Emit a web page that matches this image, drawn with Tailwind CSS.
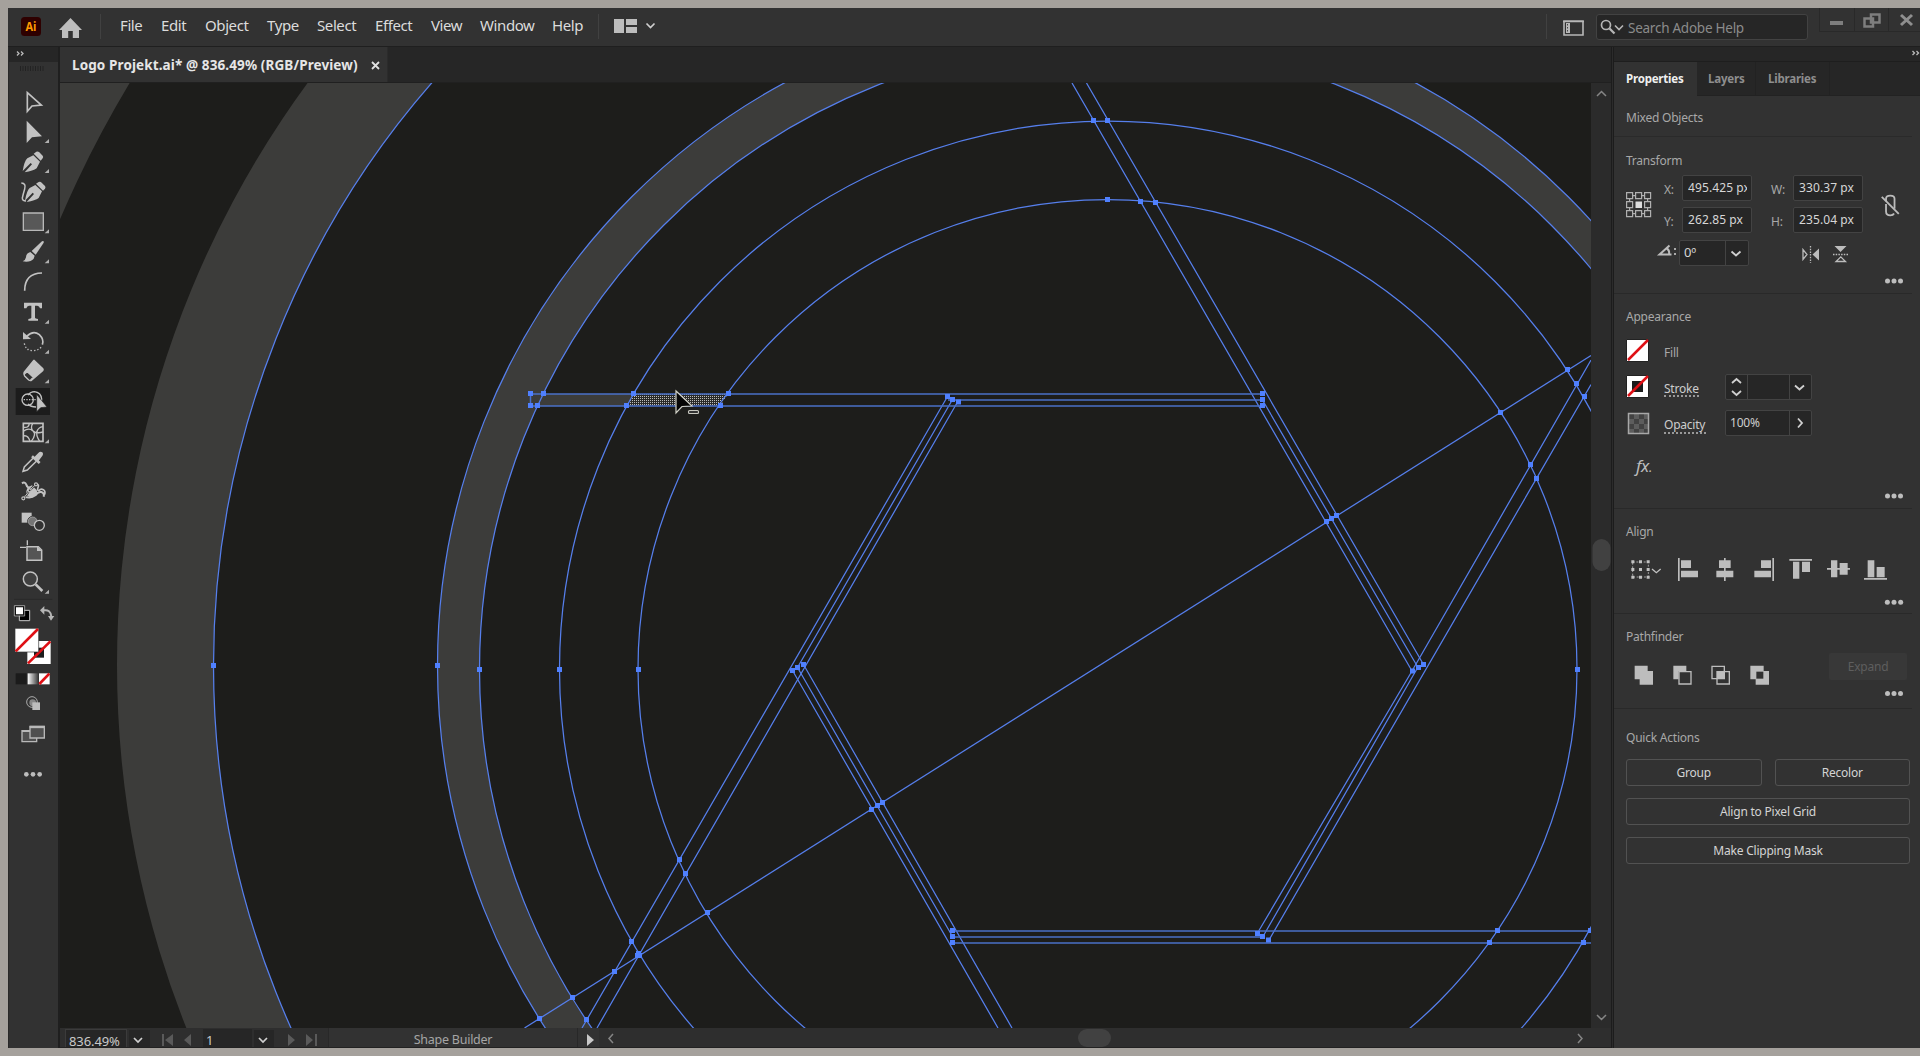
<!DOCTYPE html>
<html lang="en">
<head>
<meta charset="utf-8">
<title>Logo Projekt.ai</title>
<script src="https://cdn.jsdelivr.net/npm/@tailwindcss/browser@4"></script>
</head>
<body class="bg-[#a5a19c] w-[1920px] h-[1056px] overflow-hidden pl-2 py-2 font-['Noto_Sans',sans-serif] text-[#d6d6d6]">
<div class="h-[1040px] w-[1912px] flex flex-col bg-[#323232] overflow-hidden">

  <!-- Menu bar -->
  <header class="h-[39px] shrink-0 flex border-b border-[#1f1f1f] bg-[#323232]">
    <svg class="w-[94px] h-[38px] shrink-0" viewBox="8 8 94 38">
      <rect x="21" y="17" width="20" height="19" rx="3.5" fill="#2e0000"/>
      <text x="31" y="31" text-anchor="middle" font-size="12" font-weight="700" fill="#ff9a00" font-family="Open Sans, sans-serif" textLength="11" lengthAdjust="spacingAndGlyphs">Ai</text>
      <path d="M70.500 18L59 30h3v8h6.200v-7h4.600v7H79v-8h3z" fill="#bdbdbd"/>
      <path d="M100.500 14v25" stroke="#414141"/>
    </svg>
    <nav class="flex h-[34px] items-center text-[15px] pl-[18px] text-[#dcdcdc] tracking-[-0.4px] whitespace-nowrap">
      <span class="w-[41px]">File</span><span class="w-[44px]">Edit</span><span class="w-[62px]">Object</span><span class="w-[50px]">Type</span><span class="w-[58px]">Select</span><span class="w-[56px]">Effect</span><span class="w-[49px]">View</span><span class="w-[72px]">Window</span><span class="w-[46px]">Help</span>
    </nav>
    <svg class="w-[62px] h-[38px] shrink-0" viewBox="598 8 62 38">
      <path d="M598.500 14v25" stroke="#414141"/>
      <path d="M614 19h10v14h-10zM626 19h11v6h-11zM626 27h11v6h-11z" fill="#bdbdbd"/>
      <path d="M646.500 23.500l4 4 4-4" fill="none" stroke="#cfcfcf" stroke-width="1.700"/>
    </svg>
    <div class="grow"></div>
    <svg class="w-[52px] h-[38px] shrink-0" viewBox="1544 8 52 38">
      <path d="M1546.500 14v25" stroke="#414141"/>
      <path d="M1564 21h19v14h-19zM1563 21.500h21" fill="none" stroke="#b8b8b8" stroke-width="1.600"/>
      <path d="M1566 23h4v10h-4z" fill="#b8b8b8"/><path d="M1567.500 24v8" stroke="#444" stroke-dasharray="1.500 1.500"/>
    </svg>
    <div class="w-[212px] h-[26px] mt-1.5 border border-[#424242] bg-[#262626] rounded-[3px] flex items-center text-[13.500px] text-[#8b8b8b] tracking-[-0.25px]">
      <svg class="w-[31px] h-6 shrink-0" viewBox="1597 15 31 24"><circle cx="1606" cy="25" r="4.500" fill="none" stroke="#b5b5b5" stroke-width="1.700"/><path d="M1609.500 28.500l5 5" stroke="#b5b5b5" stroke-width="2.300"/><path d="M1615 25.500l4 4 4-4" fill="none" stroke="#b5b5b5" stroke-width="1.600"/></svg>
      <span class="pt-[3px]">Search Adobe Help</span>
    </div>
    <svg class="w-[112px] h-[38px] shrink-0" viewBox="1808 8 112 38">
      <path d="M1819.500 8v23.500H1920M1854.500 8v23M1888.500 8v23" fill="none" stroke="#292929"/>
      <path d="M1830 21h13v4h-13z" fill="#7e7e7e"/>
      <path d="M1871 14.500h8.500v8h-8.500zM1864.500 18.500h8.500v8h-8.500z" fill="#323232" stroke="#7e7e7e" stroke-width="2.500"/>
      <path d="M1901 15l11 10M1912 15l-11 10" stroke="#8f8f8f" stroke-width="3"/>
    </svg>
  </header>

  <div class="flex grow min-h-0">
    <!-- Tools -->
    <aside class="w-[50px] shrink-0 flex flex-col bg-[#323232] border-l border-[#292929]">
      <div class="h-[15px] bg-[#262626] shrink-0"><svg class="w-[49px] h-[15px]" viewBox="9 47 49 15"><path d="M17 51.500l2 2-2 2M21 51.500l2 2-2 2" fill="none" stroke="#bbb" stroke-width="1.300"/></svg></div>
      <svg class="w-[49px] h-[25px] shrink-0" viewBox="9 62 49 25"><path d="M20 68.500h24" stroke="#222" stroke-width="5" stroke-dasharray="1 1.500"/></svg>
      <svg class="w-[49px] h-[30px] shrink-0" viewBox="27 21 147 90"><path d="M82 38v56l14-16 28-3z" fill="none" stroke="#c2c2c2" stroke-width="5"/></svg>
      <svg class="w-[49px] h-[30px] shrink-0" viewBox="27 111 147 90"><path d="M80 122v67l16-17 30-3z" fill="#c2c2c2"/><path d="M147 177v12h-13z" fill="#b0b0b0"/></svg>
      <svg class="w-[49px] h-[30px] shrink-0" viewBox="27 201 147 90"><g fill="#c2c2c2"><path d="M68 273q5-30 14-38l18-9 20 19-10 20q-10 8-36 12l22-24-4-4z"/><path d="M101 221l8-6q5-2 9 2l10 10q3 4 0 8l-6 7z"/></g><path d="M147 267v12h-13z" fill="#b0b0b0"/></svg>
      <svg class="w-[49px] h-[30px] shrink-0" viewBox="27 291 147 90"><path d="M64 309q15 1 10 18t-7 27q0 9 11 9" fill="none" stroke="#c2c2c2" stroke-width="4.500"/><g fill="#c2c2c2"><path d="M75 362q5-30 14-38l17-9 20 19-10 20q-10 8-36 12l22-24-4-4z"/><path d="M108 311l8-5q5-2 9 2l10 10q3 4 0 8l-6 6z"/></g></svg>
      <svg class="w-[49px] h-[30px] shrink-0" viewBox="27 381 147 90"><path d="M70 399h60v52H70z" fill="#585858" stroke="#b8b8b8" stroke-width="4"/><path d="M147 448v12h-13z" fill="#b0b0b0"/></svg>
      <svg class="w-[49px] h-[30px] shrink-0" viewBox="27 471 147 90"><g fill="#c2c2c2"><path d="M95 513l31-29q7-3 5 4l-24 36z"/><path d="M91 516l13 11-3 9q-10 12-33 8 9-4 10-12 0-12 13-16z"/></g><path d="M147 538v12h-13z" fill="#b0b0b0"/></svg>
      <svg class="w-[49px] h-[30px] shrink-0" viewBox="27 561 147 90"><path d="M74 632q0-52 52-53" fill="none" stroke="#c2c2c2" stroke-width="5"/></svg>
      <svg class="w-[49px] h-[30px] shrink-0" viewBox="27 651 147 90"><path d="M72 668h54v17h-6q-2-8-8-8h-7v36q0 3 9 4v5H85v-5q9-1 9-4v-36h-7q-6 0-8 8h-7z" fill="#c2c2c2"/><path d="M147 719v12h-13z" fill="#b0b0b0"/></svg>
      <svg class="w-[49px] h-[30px] shrink-0" viewBox="27 741 147 90"><path d="M80 769q20-20 38-5 15 15 9 30" fill="none" stroke="#c2c2c2" stroke-width="5"/><path d="M69 756v22l24-1z" fill="#c2c2c2"/><path d="M73 790q4 22 26 22 17 0 27-14" fill="none" stroke="#c2c2c2" stroke-width="4" stroke-dasharray="4 6"/><path d="M147 809v12h-13z" fill="#b0b0b0"/></svg>
      <svg class="w-[49px] h-[30px] shrink-0" viewBox="27 831 147 90"><path d="M104 840l26 25q3 4 0 8l-34 29q-4 4-8 0l-17-18q-3-5 0-9l28-34q3-4 5-1z" fill="#c2c2c2"/><path d="M82 875l18 17-8 8q-3 2-6 0l-12-12q-3-4 0-7z" fill="#323232" stroke="#c2c2c2" stroke-width="4"/><path d="M147 898v12h-13z" fill="#b0b0b0"/></svg>
      <svg class="w-[49px] h-[30px] shrink-0" viewBox="27 921 147 90"><path d="M47 924h103v81H47z" fill="#1c1c1c"/><circle cx="83" cy="959" r="17" fill="none" stroke="#c2c2c2" stroke-width="4"/><path d="M84 945q8-10 19-10 20 2 22 22 0 12-9 20M84 972q8 9 24 9" fill="none" stroke="#c2c2c2" stroke-width="4"/><path d="M71 959h45" stroke="#c2c2c2" stroke-width="4" stroke-dasharray="4 4"/><path d="M110 943v52l12-12 19-2z" fill="#c2c2c2" stroke="#1c1c1c" stroke-width="2"/></svg>
      <svg class="w-[49px] h-[30px] shrink-0" viewBox="27 1011 147 90"><path d="M70 1030h59v54H70z" fill="none" stroke="#c2c2c2" stroke-width="5"/><path d="M70 1054q16-12 28-2t31 4M72 1042q14 2 16-12M98 1030q-8 14 2 24t-6 30M129 1040q-14 2-18 14t8 30M70 1068q14-4 20 16" fill="none" stroke="#c2c2c2" stroke-width="4"/><path d="M147 1078v12h-13z" fill="#b0b0b0"/></svg>
      <svg class="w-[49px] h-[30px] shrink-0" viewBox="27 51 147 90"><path d="M101 83l14-14q6-7 12-2 5 6-2 13l-10 14z" fill="#c2c2c2"/><path d="M96 79l23 20" stroke="#c2c2c2" stroke-width="8"/><path d="M99 85l-26 26-4 13 13-4 27-26" fill="none" stroke="#c2c2c2" stroke-width="4.500"/></svg>
      <svg class="w-[49px] h-[30px] shrink-0" viewBox="27 141 147 90"><path d="M66 160q8-6 13 4 3 10 12 9M72 199q20 8 34-3 8-12 18-10 10 4 7 14" fill="none" stroke="#c2c2c2" stroke-width="6"/><path d="M84 172l12-6 14 14q4 8-4 16l-12 8-14-8q-4-12 4-24z" fill="#c2c2c2"/><path d="M110 163q8 0 4 10t4 8q4-6 12-2 8 6 3 16" fill="none" stroke="#c2c2c2" stroke-width="5"/><path d="M73 202l13-17M92 178l13-12" stroke="#323232" stroke-width="6"/><path d="M73 202l13-17M92 178l13-12" stroke="#c2c2c2" stroke-width="3"/><g fill="#323232" stroke="#c2c2c2" stroke-width="3.500"><circle cx="108" cy="163" r="4.500"/><circle cx="89" cy="181" r="4.500"/><circle cx="70" cy="205" r="4.500"/></g></svg>
      <svg class="w-[49px] h-[30px] shrink-0" viewBox="27 231 147 90"><path d="M65 248h30v30H65z" fill="#c2c2c2"/><circle cx="98" cy="274" r="15" fill="#757575" stroke="#323232" stroke-width="3"/><circle cx="98" cy="274" r="13" fill="#757575" stroke="#a8a8a8" stroke-width="2"/><circle cx="118" cy="286" r="15" fill="#323232" stroke="#c2c2c2" stroke-width="4"/></svg>
      <svg class="w-[49px] h-[30px] shrink-0" viewBox="27 321 147 90"><path d="M81 350h34l10 10v31H81z" fill="#555" stroke="#c2c2c2" stroke-width="4.500"/><path d="M60 352h18M82 331v15" stroke="#c2c2c2" stroke-width="4"/><path d="M111 349l15 14h-15z" fill="#c2c2c2"/></svg>
      <svg class="w-[49px] h-[30px] shrink-0" viewBox="27 411 147 90"><circle cx="91" cy="447" r="21" fill="#404040" stroke="#c2c2c2" stroke-width="4.500"/><path d="M107 463l20 20" stroke="#c2c2c2" stroke-width="8"/><path d="M147 479v12h-13z" fill="#b0b0b0"/></svg>
      <!-- Fill, stroke and screen modes -->
      <svg class="w-[49px] h-[200px] shrink-0" viewBox="27 501 147 600">
        <path d="M42 508h115" stroke="#292929" stroke-width="3"/>
        <path d="M58 541h31v31H58z" fill="#000" stroke="#c8c8c8" stroke-width="3"/><path d="M46 530h25v25H46z" fill="#fff" stroke="#111" stroke-width="4"/><path d="M43 527h31v31H43z" fill="none" stroke="#c8c8c8" stroke-width="2"/>
        <path d="M130 541q22-4 24 19" fill="none" stroke="#b5b5b5" stroke-width="6"/><path d="M133 528v26l-13-13zM144 558h19l-10 14z" fill="#b5b5b5"/>
        <path d="M82 633h70v69H82z" fill="#fff"/><path d="M102 653h30v30h-30z" fill="#1c1c1c"/><path d="M84 700l67-66" stroke="#df1015" stroke-width="8"/>
        <path d="M45 595h71v71H45z" fill="#fff" stroke="#333" stroke-width="2"/><path d="M47 664l67-67" stroke="#df1015" stroke-width="8"/>
        <defs><linearGradient id="ramp"><stop stop-color="#fff"/><stop offset="1" stop-color="#333"/></linearGradient></defs>
        <path d="M47 730h33v33H47z" fill="#1b1b1b"/><path d="M83 730h33v33H83z" fill="url(#ramp)"/><path d="M117 730h32v33h-32z" fill="#fff"/><path d="M118 762l30-31" stroke="#df1015" stroke-width="8"/>
        <circle cx="96" cy="816" r="16" fill="none" stroke="#aaa" stroke-width="3"/><circle cx="98" cy="818" r="10" fill="#888"/><path d="M97 817h23v23H97z" fill="#bdbdbd"/>
        <path d="M66 902h44v33H66z" fill="#505050" stroke="#b8b8b8" stroke-width="4"/><path d="M66 903h44" stroke="#b8b8b8" stroke-width="6"/><path d="M90 889h43v35H90z" fill="#505050" stroke="#b8b8b8" stroke-width="4"/><path d="M89 891h45" stroke="#b8b8b8" stroke-width="7"/>
        <g fill="#bdbdbd"><circle cx="79" cy="1033" r="7"/><circle cx="99" cy="1033" r="7"/><circle cx="119" cy="1033" r="7"/></g>
      </svg>
    </aside>
    <div class="w-0.5 shrink-0 bg-[#1f1f1f]"></div>

    <!-- Document -->
    <main class="w-[1551px] shrink-0 flex flex-col">
      <div class="h-9 shrink-0 bg-[#262626] flex border-b border-[#202020]">
        <div class="w-[328px] bg-[#323232] border-r border-[#2b2b2b] flex items-center pl-3 pt-0.5 text-[13.500px] font-bold text-[#e6e6e6] whitespace-nowrap">
          <span class="w-[299px] tracking-[0.11px]">Logo Projekt.ai* @ 836.49% (RGB/Preview)</span>
          <svg class="w-[9px] h-[9px]" viewBox="0 0 9 9"><path d="M1 1l7 7M8 1L1 8" stroke="#e0e0e0" stroke-width="1.800"/></svg>
        </div>
      </div>
      <div class="flex h-[945px] shrink-0">
        <svg class="w-[1531px] h-[945px] bg-[#1d1d1b]" viewBox="60 83 1531 945">
          <defs><pattern id="mesh" width="2" height="2" patternUnits="userSpaceOnUse"><rect width="2" height="2" fill="#2a2a28"/><rect width="1" height="1" fill="#bcbcba"/></pattern></defs>
          <path fill-rule="evenodd" fill="#3c3c3a" d="M0 0H1700V1100H0zM-31.500 665a1131.500 1131.500 0 1 0 2263 0a1131.500 1131.500 0 1 0 -2263 0z"/>
          <path fill-rule="evenodd" fill="#3c3c3a" d="M117 665a983 983 0 1 0 1966 0a983 983 0 1 0 -1966 0zM213.500 665.500a886.500 886.500 0 1 0 1773 0a886.500 886.500 0 1 0 -1773 0z"/>
          <path fill-rule="evenodd" fill="#3c3c3a" d="M437.500 665.500a662.500 662.500 0 1 0 1325 0a662.500 662.500 0 1 0 -1325 0zM479.500 669.500a628 628 0 1 0 1256 0a628 628 0 1 0 -1256 0z"/>
          <path d="M530 394H633L626 406H530z" fill="#3c3c3a"/>
          <path d="M634 394H728L720 406H626z" fill="url(#mesh)"/>
          <g fill="none" stroke="#567fec" stroke-width="1.250">
            <circle cx="1100" cy="665.500" r="886.500"/><circle cx="1100" cy="665.500" r="662.500"/><circle cx="1107.500" cy="669.500" r="628"/><circle cx="1107.500" cy="669" r="548"/><circle cx="1107.500" cy="669" r="469.500"/>
            <path d="M524.500 1028L1591 355.500"/>
            <path d="M1072 83L1412 671M1086.500 83L1423.500 664.500M1262.500 400L1418 667.500"/>
            <path d="M1591 360L1412 671L1257.500 933M1591 384.500L1269 940M1418 667L1263 936.500"/>
            <path d="M947.500 396.500L582 1028M957.500 402L597 1028M952.500 399.500L797.500 667.500"/>
            <path d="M792.500 670.500L998 1028M797.500 667.500L952.500 936.500M803.500 664.500L1012 1028"/>
          </g>
          <path fill="none" stroke="#4a70c8" stroke-width="1.500" d="M530.500 394H1262.500M530.500 406H1262.500M530.500 394v12M948 400H1262.500M952.500 931H1591M952.500 937H1263M952.500 943H1591"/>
          <path fill="none" stroke="#4f80ff" stroke-width="5" d="M528 393.500h5M541 393.500h5M528 405.500h5M535 405.500h5M631 393.500h5M624 405.500h5M726 393.500h5M718 405.500h5M1260 393.500h5M1260 399.500h5M1260 405.500h5M1324 521.500h5M1329 518.500h5M1334 515.500h5M1410 671h5M1416 667.500h5M1421 664.500h5M1498 412.500h5M1565 369.500h5M1574 383.500h5M1582 396.500h5M1528 464.500h5M1534 478.500h5M1575 669.500h5M1091 120.500h5M1105 120.500h5M1105 199.500h5M1138 201.500h5M1153 202.500h5M211 665.500h5M435 665.500h5M477 669.500h5M557 669.500h5M636 669.500h5M570 997.500h5M537 1018.500h5M584 1019.500h5M612 971.500h5M635 955.500h7M636 953.500h5M629 941.500h5M677 859.500h5M683 873.500h5M705 912.500h5M790 670.500h5M795 667.500h5M801 664.500h5M869 809.500h5M875 805.500h5M880 802.500h5M950 930.500h5M950 936.500h5M950 942.500h5M945 396.500h5M950 399.500h5M956 402h5M1255 933.500h5M1260 936.500h5M1266 940h5M1495 930.500h5M1487 942.500h5M1588 930.500h5M1581 942.500h5"/>
          <path d="M676 391v22l6-6.500 10-.5z" fill="#050505" stroke="#d2d2c8" stroke-width="1.200"/>
          <rect x="688.500" y="410.500" width="10" height="3" rx="1" fill="#333" stroke="#c8c8c0" stroke-width="1.100"/>
        </svg>
        <svg class="w-5 h-[945px] bg-[#2b2b2b]" viewBox="1591 83 20 945"><path d="M1597 96l4.500-4.500L1606 96M1597 1015l4.500 4.500L1606 1015" fill="none" stroke="#858585" stroke-width="1.500"/><rect x="1592.500" y="539" width="18" height="32" rx="9" fill="#414141"/></svg>
      </div>
      <div class="h-5 shrink-0 flex bg-[#2e2e2e] border-b border-[#222] text-[13px] text-[#c9c9c9] overflow-hidden">
        <div class="ml-[5px] w-[62px] h-[19px] mt-px bg-[#262626] border border-b-0 border-[#3b3b3b] pl-[3px] leading-[22px] tracking-[-0.1px] whitespace-nowrap">836.49%</div>
        <svg class="w-[76px] h-5" viewBox="127 1028 76 20"><path d="M129 1030h21v20h-21z" fill="#262626"/><path d="M134 1038l4 4 4-4" fill="none" stroke="#d0d0d0" stroke-width="1.700"/><path d="M162 1034h2v12h-2zM173 1034v12l-8-6zM191 1034v12l-7-6z" fill="#5a5a5a"/></svg>
        <div class="w-[49px] h-[19px] mt-px bg-[#262626] pl-[3px] leading-[23px]">1</div>
        <svg class="w-[76px] h-5" viewBox="252 1028 76 20"><path d="M254 1030h20v20h-20z" fill="#262626"/><path d="M259 1038l4 4 4-4" fill="none" stroke="#d0d0d0" stroke-width="1.700"/><path d="M288 1034v12l7-6zM306 1034v12l7-6zM315 1034h2v12h-2z" fill="#5a5a5a"/></svg>
        <div class="w-[250px] h-[19px] bg-[#323232] border-x border-[#282828] text-center leading-[24px] text-[#a5a5a5] text-[12.500px] tracking-[-0.25px]">Shape Builder</div>
        <svg class="w-[44px] h-5" viewBox="578 1028 44 20"><path d="M578 1028h21v20h-21z" fill="#323232"/><path d="M587 1034v12l7-6z" fill="#c8c8c8"/><path d="M613 1034l-4 4.500 4 4.500" fill="none" stroke="#858585" stroke-width="1.500"/></svg>
        <svg class="w-[989px] h-5" viewBox="622 1028 989 20"><rect x="1078" y="1029" width="33" height="18" rx="9" fill="#414141"/><path d="M1578 1034l4 4.500-4 4.500" fill="none" stroke="#858585" stroke-width="1.500"/></svg>
      </div>
    </main>
    <div class="w-[3px] shrink-0 bg-[#2b2b2b] border-x border-[#1c1c1c]"></div>

    <!-- Properties panel -->
    <aside class="w-[306px] shrink-0 bg-[#323232] text-[12px] tracking-[-0.22px] text-[#a8a8a8] whitespace-nowrap">
      <div class="h-[15px] bg-[#262626] border-b border-[#1e1e1e] flex justify-end"><svg class="w-2 h-3" viewBox="1912 48 8 12"><path d="M1912.500 52l2 2-2 2M1916.500 52l2 2-2 2" fill="none" stroke="#bbb" stroke-width="1.300"/></svg></div>
      <div class="flex h-[34px] bg-[#262626] font-bold text-[11.500px] tracking-[-0.2px] items-stretch leading-[34px]">
        <div class="w-[83px] pl-3 bg-[#323232] text-[#efefef]">Properties</div>
        <div class="w-[59px] pl-[11px] border-r border-b border-[#222] text-[#8e8e8e]">Layers</div>
        <div class="w-[74px] pl-3 border-r border-b border-[#222] text-[#8e8e8e]">Libraries</div>
        <div class="grow border-b border-[#222]"></div>
      </div>
      <div class="h-[41px] pl-3 leading-[43px] border-b border-[#2a2a2a] mr-2">Mixed Objects</div>

      <section class="h-[157px] mr-2 border-b border-[#292929] pt-[15px] pl-3">
        <h2 class="h-[18px] leading-[18px]">Transform</h2>
        <div class="flex mt-[5px] h-[60px]">
          <svg class="w-[38px] h-[60px] shrink-0" viewBox="0 0 38 60"><g fill="none" stroke="#b0b0b0" stroke-width="1.200"><path d="M.6 17.600h6v6h-6zM9.600 17.600h6v6h-6zM18.600 17.600h6v6h-6zM.6 26.600h6v6h-6zM18.600 26.600h6v6h-6zM.6 35.600h6v6h-6zM9.600 35.600h6v6h-6zM18.600 35.600h6v6h-6zM6.600 20.600h3M15.600 20.600h3M6.600 38.600h3M15.600 38.600h3M3.600 23.600v3M3.600 32.600v3M21.600 23.600v3M21.600 32.600v3"/></g><path d="M9.500 26.500h6.500v6.500H9.500z" fill="#ddd"/></svg>
          <div class="grid grid-cols-[18px_70px_41px_70px] grid-rows-[26px_26px] gap-y-[6px] content-start items-center leading-[24px]">
            <span class="pt-[3px]">X:</span><div class="h-[26px] rounded-[2px] border border-[#434343] bg-[#262626] pl-[5px] pr-1 text-[#d6d6d6] tracking-[0.1px]"><div class="overflow-hidden w-[59px]">495.425 px</div></div><span class="pl-[19px] pt-[3px]">W:</span><div class="h-[26px] rounded-[2px] border border-[#434343] bg-[#262626] pl-[5px] text-[#d6d6d6] tracking-[0.1px]">330.37 px</div>
            <span class="pt-[3px]">Y:</span><div class="h-[26px] rounded-[2px] border border-[#434343] bg-[#262626] pl-[5px] text-[#d6d6d6] tracking-[0.1px]">262.85 px</div><span class="pl-[19px] pt-[3px]">H:</span><div class="h-[26px] rounded-[2px] border border-[#434343] bg-[#262626] pl-[5px] text-[#d6d6d6] tracking-[0.1px]">235.04 px</div>
          </div>
          <svg class="w-9 h-[60px] ml-[15px]" viewBox="1878 176 36 60"><path d="M1886.500 202v-2.500q0-3.500 4.500-3.500t4.500 3.500V210M1886.500 205v8q0 4 4.500 4 3 0 4-2" fill="none" stroke="#bcbcbc" stroke-width="1.900"/><path d="M1882 197.500l18 18" stroke="#bcbcbc" stroke-width="1.900"/></svg>
        </div>
        <div class="flex mt-[5px] h-[27px]">
          <svg class="w-[53px] h-[27px]" viewBox="1626 241 53 27"><path d="M1671.500 255.500h-12l10-9M1666 249q4 2 3 6.500" fill="none" stroke="#bcbcbc" stroke-width="2"/><path d="M1674 249h2v2h-2zM1674 254h2v2h-2z" fill="#aaa"/></svg>
          <div class="w-[70px] h-[26px] rounded-[2px] border border-[#434343] bg-[#262626] flex text-[13px] text-[#d6d6d6] leading-[23px]"><span class="w-[46px] pl-1 border-r border-[#434343]">0º</span><svg class="w-[22px] h-6" viewBox="0 0 22 24"><path d="M5.500 10.500l4.500 4 4.500-4" fill="none" stroke="#d0d0d0" stroke-width="1.800"/></svg></div>
          <svg class="w-[110px] h-[27px]" viewBox="1749 241 110 27"><g fill="none" stroke="#bcbcbc" stroke-width="1.300"><path d="M1803 250.500v10l4-5zM1836 262.500h9.500l-4.700-4.700z"/><path d="M1810.500 247v17M1833 255.500h15" stroke-dasharray="1.500 1.200"/></g><path d="M1819 249.500v12l-6.500-6zM1834.500 247h12l-6 6z" fill="#bcbcbc"/></svg>
        </div>
        <svg class="w-[280px] h-[20px] block" viewBox="1626 267 280 20"><g fill="#bdbdbd"><circle cx="1887.500" cy="281" r="2.500"/><circle cx="1894" cy="281" r="2.500"/><circle cx="1900.500" cy="281" r="2.500"/></g></svg>
      </section>

      <section class="h-[215px] mr-2 border-b border-[#292929] pt-[14px] pl-3">
        <h2 class="h-[18px] leading-[18px]">Appearance</h2>
        <div class="flex h-[36px] mt-[8px] leading-[38px]"><svg class="w-[38px] h-9" viewBox="1626 335 38 36"><path d="M1626.500 340.500h22v22h-22z" fill="#fff" stroke="#222"/><path d="M1628 361l20-20" stroke="#df1015" stroke-width="2.500"/></svg>Fill</div>
        <div class="flex h-[36px] leading-[34px] text-[#cdcdcd]"><svg class="w-[38px] h-9" viewBox="1626 371 38 36"><path d="M1626.500 376.500h22v22h-22z" fill="#fff" stroke="#222"/><path d="M1632 382h11v11h-11z" fill="#1c1c1c"/><path d="M1628 397l20-20" stroke="#df1015" stroke-width="2.500"/></svg><div class="w-[61px] pt-[11px]"><span class="block w-[35px] h-[16px] leading-[15px] border-b-2 border-dotted border-[#999]">Stroke</span></div>
          <div class="mt-[4px] w-[87px] h-[26px] rounded-[2px] border border-[#434343] bg-[#262626]"><svg class="w-[85px] h-6" viewBox="0 0 85 24"><path d="M21.500 0v24M63.500 0v24" stroke="#434343"/><path d="M6 8l4.500-4L15 8M6 16l4.500 4 4.500-4M69 10.500l4.500 4 4.500-4" fill="none" stroke="#d0d0d0" stroke-width="1.800"/></svg></div></div>
        <div class="flex h-[36px] text-[#cdcdcd]"><svg class="w-[38px] h-9" viewBox="1626 406 38 36"><defs><pattern id="check" x="1629" y="414" width="10" height="10" patternUnits="userSpaceOnUse"><path d="M0 0h10v10H0z" fill="#5d5d5d"/><path d="M0 0h5v5H0zM5 5h5v5H5z" fill="#424242"/></pattern></defs><path d="M1628.500 413.500h20v20h-20z" fill="url(#check)" stroke="#a8a8a8" stroke-width="1.500"/></svg><div class="w-[61px] pt-[11px]"><span class="block w-[42px] h-[17px] leading-[15px] border-b-2 border-dotted border-[#999]">Opacity</span></div>
          <div class="mt-[4px] w-[87px] h-[26px] rounded-[2px] border border-[#434343] bg-[#262626] flex leading-[24px]"><span class="w-[64px] pl-1 border-r border-[#434343]">100%</span><svg class="w-[20px] h-6" viewBox="0 0 20 24"><path d="M8 7.500l4 4.500-4 4.500" fill="none" stroke="#d0d0d0" stroke-width="1.800"/></svg></div></div>
        <div class="mt-[10px] h-[28px] pl-[10px] text-[17px] italic leading-7 text-[#bdbdbd] tracking-[-0.3px]">fx<span class="text-[13px]">.</span></div>
        <svg class="w-[280px] h-[20px] block" viewBox="1626 480 280 20"><g fill="#bdbdbd"><circle cx="1887.500" cy="496" r="2.500"/><circle cx="1894" cy="496" r="2.500"/><circle cx="1900.500" cy="496" r="2.500"/></g></svg>
      </section>

      <section class="h-[105px] mr-2 border-b border-[#292929] pt-[14px] pl-3">
        <h2 class="h-[18px] leading-[18px]">Align</h2>
        <svg class="w-[280px] h-[64px]" viewBox="78 93 840 192">
          <path d="M98 156h47v45H98z" fill="none" stroke="#b5b5b5" stroke-width="2.500" stroke-dasharray="6 5"/>
          <path d="M94 151h9v9h-9zM117 151h9v9h-9zM140 151h9v9h-9zM94 174h9v9h-9zM117 174h9v9h-9zM140 174h9v9h-9zM94 197h9v9h-9zM117 197h9v9h-9zM140 197h9v9h-9z" fill="#c2c2c2"/>
          <path d="M156 177l13 11 13-11" fill="none" stroke="#c2c2c2" stroke-width="4"/>
          <path fill="#bdbdbd" d="M234 144h5v69h-5zM243 151h30v23h-30zM243 182h51v20h-51zM372 144h5v69h-5zM357 151h35v23h-35zM349 182h51v20h-51zM517 144h5v69h-5zM483 151h30v23h-30zM463 182h50v20h-50zM568 147h68v5h-68zM579 155h19v51h-19zM606 155h24v31h-24zM681 174h69v5h-69zM693 151h19v51h-19zM719 159h24v35h-24zM792 204h69v5h-69zM803 151h20v51h-20zM830 171h24v31h-24z"/>
          <g fill="#bdbdbd"><circle cx="862" cy="277" r="7.500"/><circle cx="882" cy="277" r="7.500"/><circle cx="902" cy="277" r="7.500"/></g>
        </svg>
      </section>

      <section class="h-[95px] mr-2 border-b border-[#292929] pt-[14px] pl-3">
        <h2 class="h-[18px] leading-[18px]">Pathfinder</h2>
        <div class="flex">
          <svg class="w-[203px] h-[40px]" viewBox="78 409 609 120">
            <path fill="#bdbdbd" d="M104 468h39v16h16v41h-40v-16h-15zM220 468h39v16h-23v25h-16zM451 468h40v16h16v41h-40v-16h-16z"/>
            <path d="M237 486h36v37h-36zM336 470h37v37h-37zM351 486h37v37h-37z" fill="none" stroke="#bdbdbd" stroke-width="4"/><path d="M351 486h22v21h-22z" fill="#bdbdbd"/><path d="M469 486h21v21h-21z" fill="#323232"/>
          </svg>
          <div class="mt-[7px] w-[78px] h-[27px] rounded-[2px] bg-[#383838] text-center leading-[27px] text-[#5e5e5e]">Expand</div>
        </div>
        <svg class="w-[280px] h-[16px] block" viewBox="1626 686 280 16"><g fill="#bdbdbd"><circle cx="1887.500" cy="693.500" r="2.500"/><circle cx="1894" cy="693.500" r="2.500"/><circle cx="1900.500" cy="693.500" r="2.500"/></g></svg>
      </section>

      <section class="pt-[20px] pl-3 pr-[10px]">
        <h2 class="h-[18px] leading-[18px]">Quick Actions</h2>
        <div class="grid grid-cols-2 gap-x-[13px] gap-y-[12px] mt-[12px] text-center leading-[26px] text-[#d4d4d4]">
          <div class="h-[27px] border border-[#525252] rounded-[3px]">Group</div><div class="h-[27px] border border-[#525252] rounded-[3px]">Recolor</div>
          <div class="col-span-2 h-[27px] border border-[#525252] rounded-[3px]">Align to Pixel Grid</div>
          <div class="col-span-2 h-[27px] border border-[#525252] rounded-[3px]">Make Clipping Mask</div>
        </div>
      </section>
    </aside>
  </div>
</div>
</body>
</html>
